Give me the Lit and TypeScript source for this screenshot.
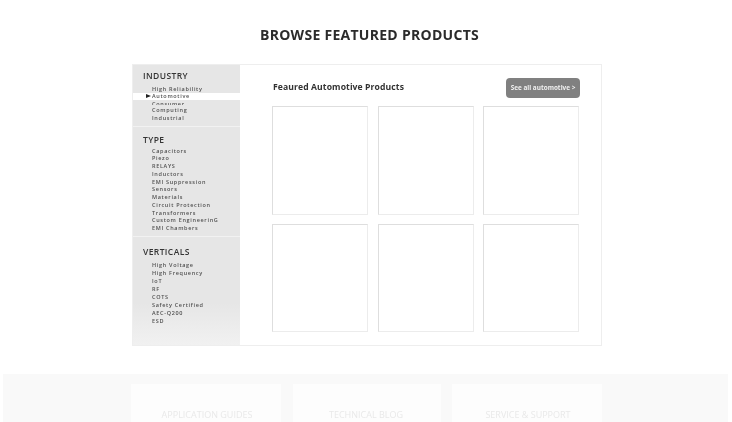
import { LitElement, html, css } from "lit";
import { customElement } from "lit/decorators.js";

const groups = [
  { title: "INDUSTRY", cls: "g1", items: ["High Reliability", "Automotive", "Consumer", "Computing", "Industrial"] },
  { title: "TYPE", cls: "g2", items: ["Capacitors", "Piezo", "RELAYS", "Inductors", "EMI Suppression", "Sensors", "Materials", "Circuit Protection", "Transformers", "Custom EngineerinG", "EMI Chambers"] },
  { title: "VERTICALS", cls: "g3", items: ["High Voltage", "High Frequency", "IoT", "RF", "COTS", "Safety Certified", "AEC-Q200", "ESD"] },
];

@customElement("app-root")
export class AppRoot extends LitElement {
  static styles = css`
    :host { display: block; width: 732px; height: 422px; overflow: hidden; background: #fff; font-family: "Open Sans", sans-serif; }
    .page { height: 422px; filter: blur(0.3px); }
    h1 { margin: 0; padding-top: 25px; height: 39px; box-sizing: border-box; line-height: 20px; text-align: center; font-size: 14px; font-weight: 700; letter-spacing: 0.28px; color: #2b2b2b; padding-left: 7px; }
    .panel { margin: 25px 0 0 132px; width: 470px; height: 282px; box-sizing: border-box; border: 1px solid #eeeeee; display: flex; }
    .side { width: 107px; flex: none; background: linear-gradient(#e6e6e6 0, #e6e6e6 85%, #f1f1f1 100%); }
    .group { padding: 0 0 0 10px; border-bottom: 1px solid #f2f2f2; box-sizing: border-box; }
    .group:last-child { border-bottom: none; }
    .g1 { height: 62px; padding-top: 4px; }
    .g2 { height: 110px; padding-top: 6px; }
    .g3 { padding-top: 8px; }
    h2 { margin: 0 0 2.5px; font-size: 8.5px; font-weight: 600; line-height: 13px; letter-spacing: 0.4px; color: #333; }
    ul { list-style: none; margin: 0; padding: 0; }
    li { font-size: 5.5px; font-weight: 600; line-height: 8px; letter-spacing: 0.68px; color: #505050; padding-left: 9px; white-space: nowrap; }
    .g2 li { line-height: 7.75px; }
    .g3 li { line-height: 8px; }
    .g2 h2 { margin-bottom: 1.5px; }
    li.on { background: #fff; margin: 0.5px 0 0 -10px; line-height: 7px; padding-left: 19px; position: relative; }
    li.on::before { content: ""; position: absolute; left: 13px; top: 1px; border-left: 5px solid #222; border-top: 2.5px solid transparent; border-bottom: 2.5px solid transparent; }
    li.cut { height: 5px; margin-bottom: 1px; overflow: hidden; }
    .main { flex: 1; padding: 12px 22px 0 32px; box-sizing: border-box; }
    .head { display: flex; justify-content: space-between; align-items: center; height: 21px; margin-bottom: 8px; }
    .head h3 { margin: 0 0 2px 1px; font-size: 8.6px; font-weight: 700; color: #333; letter-spacing: 0.1px; }
    .btn { width: 74px; height: 20px; line-height: 20px; text-align: center; font-size: 6.4px; font-weight: 700; color: #f0f0f0; background: #808080; border-radius: 4px; }
    .grid { display: grid; grid-template-columns: repeat(3, 96px); column-gap: 9.6px; row-gap: 9px; width: 308px; }
    .cell { height: 108.5px; box-sizing: border-box; border: 1px solid #dedede; border-right-color: #ececec; border-bottom-color: #ececec; background: #fff; }
    .band { margin: 28px 4px 0 3px; height: 60px; background: #f9f9f9; padding: 10px 0 0 128px; display: flex; gap: 11px; box-sizing: border-box; }
    .card { background: #fdfdfd; height: 50px; padding-top: 25px; box-sizing: border-box; text-align: center; font-size: 9px; line-height: 12px; color: #e9e9e9; }
    .c1 { width: 150px; padding-left: 2px; }
    .c2 { width: 148px; margin-left: 1px; padding-right: 2px; }
    .c3 { width: 150px; padding-left: 2px; }
  `;

  render() {
    return html`
      <div class="page">
        <h1>BROWSE FEATURED PRODUCTS</h1>
        <div class="panel">
          <div class="side">
            ${groups.map(
              (g) => html`<div class="group ${g.cls}">
                <h2>${g.title}</h2>
                <ul>
                  ${g.items.map(
                    (i) => html`<li class="${i === "Automotive" ? "on" : i === "Consumer" ? "cut" : ""}">${i}</li>`
                  )}
                </ul>
              </div>`
            )}
          </div>
          <div class="main">
            <div class="head">
              <h3>Feaured Automotive Products</h3>
              <div class="btn">See all automotive &gt;</div>
            </div>
            <div class="grid">
              ${[0, 1, 2, 3, 4, 5].map(() => html`<div class="cell"></div>`)}
            </div>
          </div>
        </div>
        <div class="band">
          <div class="card c1">APPLICATION GUIDES</div>
          <div class="card c2">TECHNICAL BLOG</div>
          <div class="card c3">SERVICE &amp; SUPPORT</div>
        </div>
      </div>
    `;
  }
}
